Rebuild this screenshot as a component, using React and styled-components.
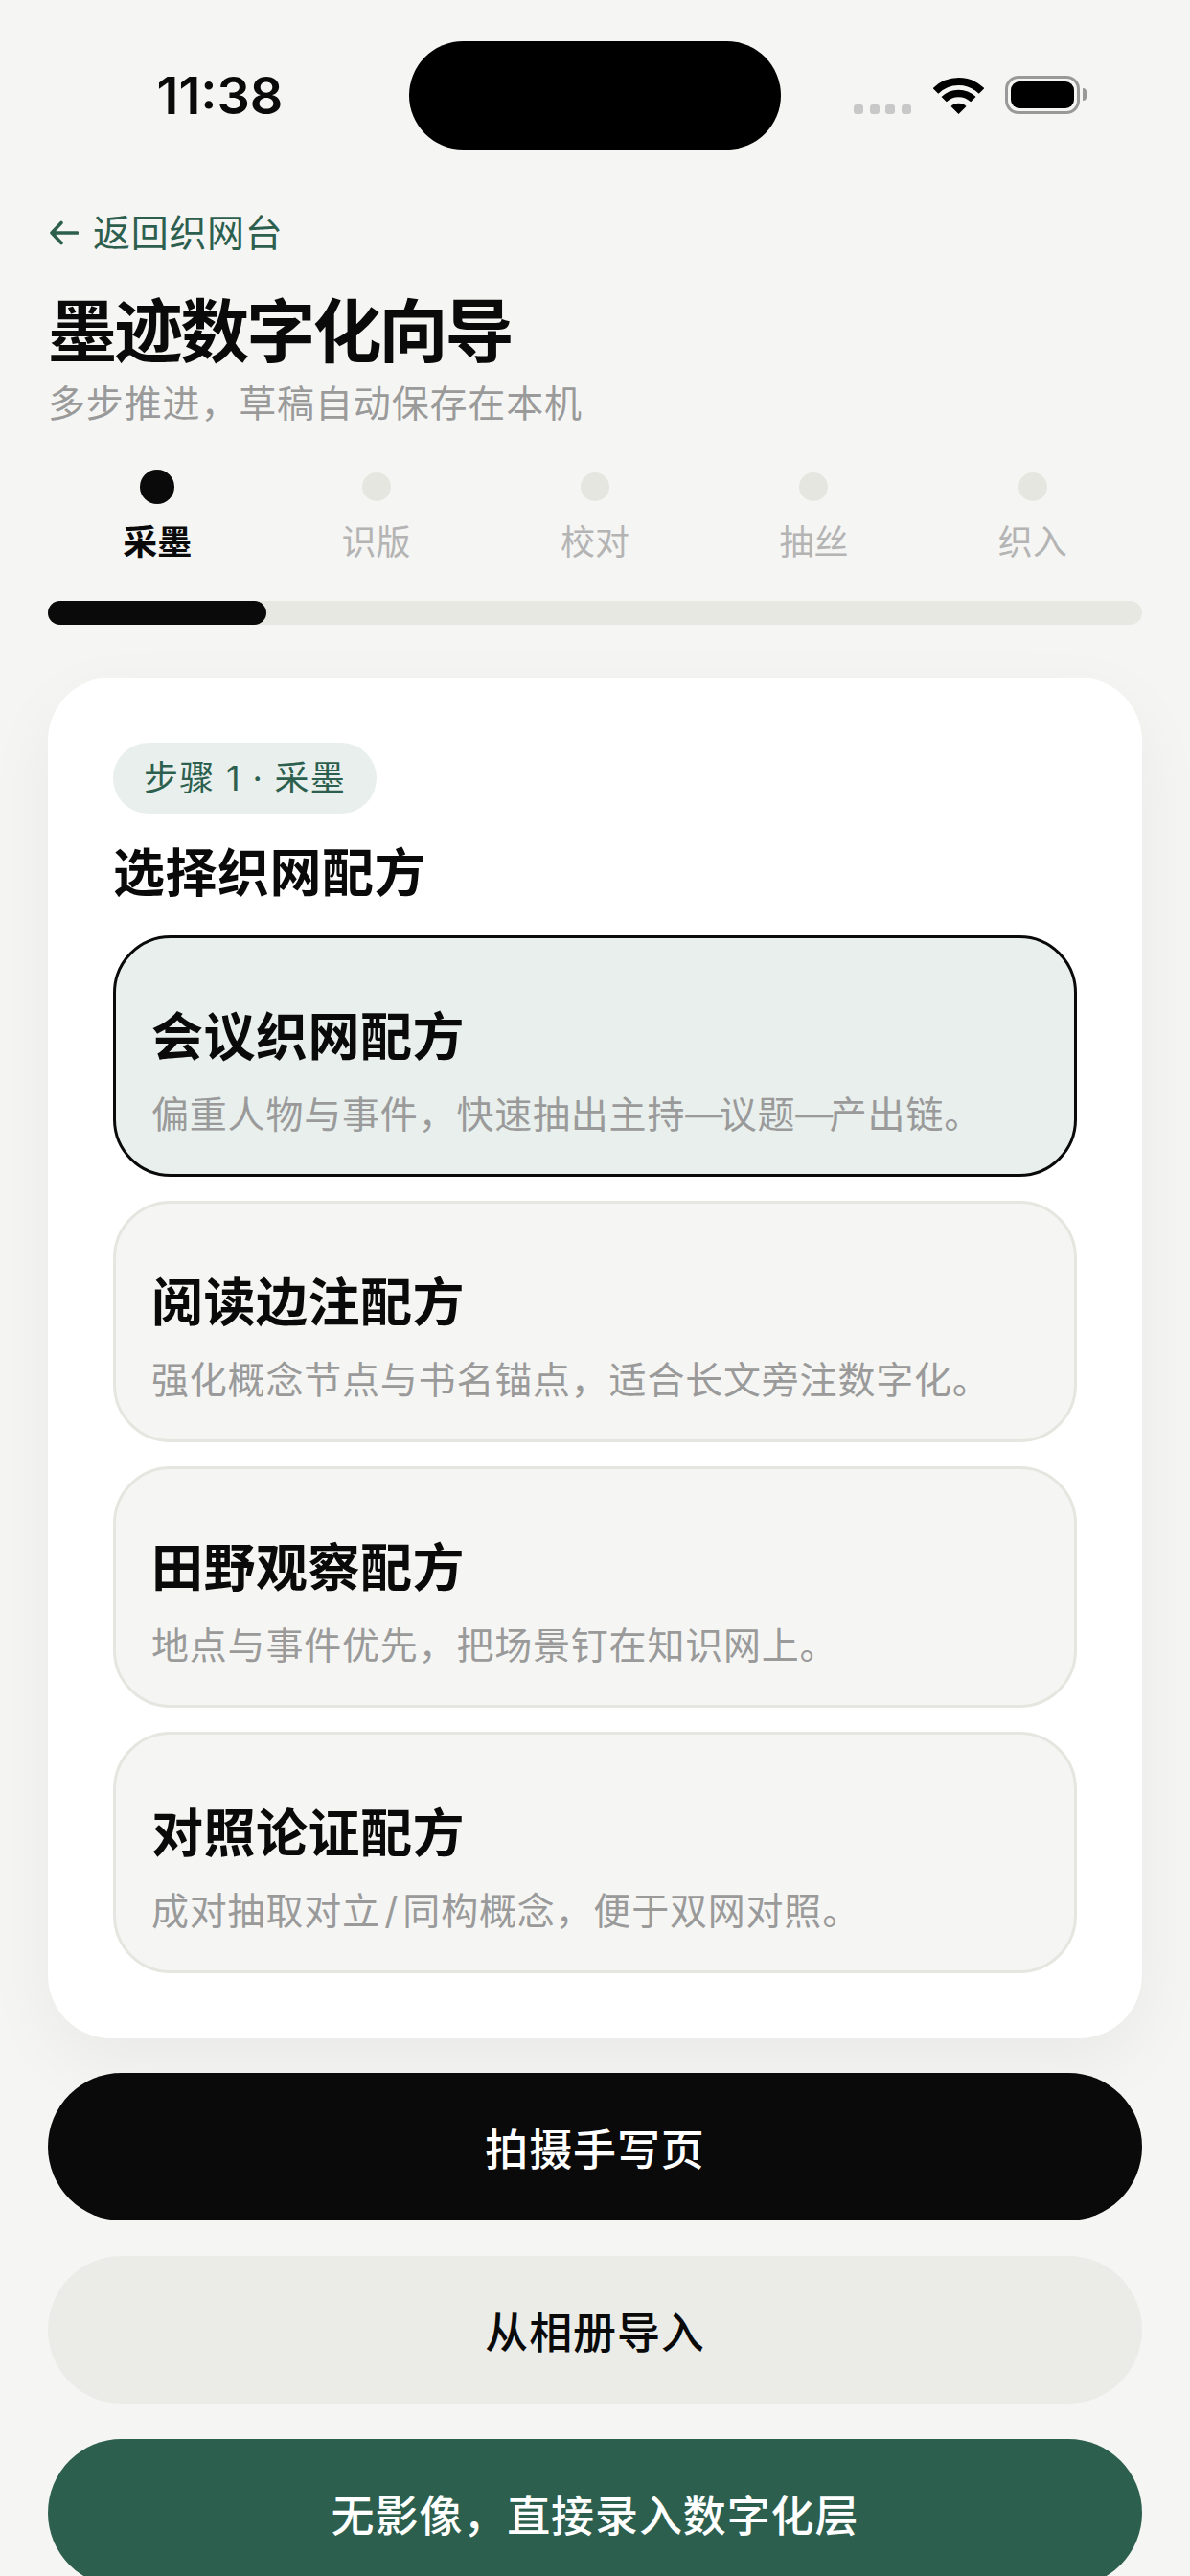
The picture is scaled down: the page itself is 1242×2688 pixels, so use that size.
import styled, { createGlobalStyle } from "styled-components";

const GlobalStyle = createGlobalStyle`
  html, body {
    margin: 0;
    padding: 0;
    background: #f5f5f3;
  }
  * {
    box-sizing: border-box;
  }
`;

const S = {};
S.Page = styled.div`
  width: 1242px;
  height: 2688px;
  overflow: hidden;
  background: #f5f5f3;
  color: #0a0a0a;
  font-family: "Inter", "Noto Sans CJK SC", sans-serif;
`;
S.StatusBar = styled.div`
  display: grid;
  grid-template-columns: 427px 388px 1fr;
  padding-top: 43px;
  height: 156px;
`;
S.Time = styled.div`
  padding: 24px 0 0 32px;
  text-align: center;
  font-size: 54px;
  line-height: 66px;
  font-weight: 600;
`;
S.Island = styled.div`
  height: 113px;
  border-radius: 57px;
  background: #000;
`;
S.StatusIcons = styled.div`
  display: flex;
  align-items: flex-end;
  height: 76px;
  padding-left: 76px;
`;
S.SignalDots = styled.div`
  display: flex;
  gap: 6.5px;
  margin-right: 23px;
`;
S.SignalDot = styled.div`
  width: 10px;
  height: 10px;
  border-radius: 3px;
  background: #c8c8c8;
`;
S.Battery = styled.div`
  display: flex;
  align-items: center;
  width: 78px;
  height: 40px;
  margin-left: 22px;
  padding: 3px;
  border: 3px solid #999;
  border-radius: 14px;
  position: relative;
  &::after {
    content: "";
    position: absolute;
    right: -10px;
    top: 10px;
    width: 4px;
    height: 13px;
    border-radius: 0 4px 4px 0;
    background: #999;
  }
`;
S.BatteryFill = styled.div`
  width: 100%;
  height: 100%;
  border-radius: 9px;
  background: #000;
`;
S.Main = styled.div`
  padding: 0 50px;
`;
S.Back = styled.div`
  display: flex;
  align-items: center;
  gap: 15px;
  margin-top: 62px;
  padding-left: 2px;
  color: #2d5f4f;
  font-size: 39px;
  line-height: 50px;
  letter-spacing: 0.7px;
`;
S.Title = styled.h1`
  margin: 33px 0 0;
  font-size: 72px;
  line-height: 90px;
  font-weight: 700;
  letter-spacing: -2.9px;
`;
S.Subtitle = styled.p`
  margin: 5px 0 0;
  color: #9a9a9a;
  font-size: 39px;
  line-height: 50px;
  letter-spacing: 0.85px;
`;
S.Steps = styled.div`
  display: grid;
  grid-template-columns: repeat(5, 1fr);
  margin-top: 44px;
`;
S.Step = styled.div`
  display: flex;
  flex-direction: column;
  align-items: center;
`;
S.DotSlot = styled.div`
  display: flex;
  align-items: center;
  justify-content: center;
  height: 36px;
`;
S.Dot = styled.div`
  width: ${({ $active }) => ($active ? "36px" : "30px")};
  height: ${({ $active }) => ($active ? "36px" : "30px")};
  border-radius: 50%;
  background: ${({ $active }) => ($active ? "#0a0a0a" : "#e6e6e0")};
`;
S.StepLabel = styled.div`
  margin-top: 17px;
  color: ${({ $active }) => ($active ? "#0a0a0a" : "#b4b4b4")};
  font-size: 36px;
  line-height: 46px;
  font-weight: ${({ $active }) => ($active ? 700 : 400)};
`;
S.Track = styled.div`
  height: 25px;
  margin-top: 38px;
  border-radius: 13px;
  background: #e8e8e3;
`;
S.TrackFill = styled.div`
  height: 100%;
  border-radius: 13px;
  background: #0a0a0a;
`;
S.Card = styled.div`
  margin-top: 55px;
  padding: 68px;
  border-radius: 66px;
  background: #fff;
  box-shadow: 0 24px 72px rgba(10, 10, 10, 0.05);
`;
S.Pill = styled.div`
  display: inline-block;
  height: 74px;
  padding: 0 32px;
  border-radius: 37px;
  background: #e8efec;
  color: #2d5f4f;
  font-size: 36px;
  line-height: 74px;
  letter-spacing: 1.3px;
`;
S.Heading = styled.h2`
  margin: 27px 0 0;
  font-size: 54px;
  line-height: 72px;
  font-weight: 700;
  letter-spacing: 0.5px;
`;
S.Options = styled.div`
  display: flex;
  flex-direction: column;
  gap: 25px;
  margin-top: 28px;
`;
S.Option = styled.div`
  display: flex;
  flex-direction: column;
  justify-content: center;
  height: 252px;
  padding: 31px 37px 0;
  border: 3px solid ${({ $selected }) => ($selected ? "#0a0a0a" : "#e6e6e0")};
  border-radius: 60px;
  background: ${({ $selected }) => ($selected ? "#e8efec" : "#f5f5f3")};
`;
S.OptionTitle = styled.div`
  font-size: 54px;
  line-height: 72px;
  font-weight: 700;
  letter-spacing: 0.5px;
`;
S.OptionDesc = styled.div`
  margin-top: 19px;
  color: #9a9a9a;
  font-size: 39px;
  line-height: 50px;
  letter-spacing: 0.8px;
  white-space: nowrap;
`;
S.Actions = styled.div`
  display: flex;
  flex-direction: column;
  gap: 37px;
  margin-top: 36px;
`;
S.Action = styled.button`
  flex: none;
  display: block;
  width: 100%;
  height: 154px;
  padding: 0;
  border: none;
  border-radius: 77px;
  background: ${({ $bg }) => $bg};
  color: ${({ $fg }) => $fg};
  font-family: inherit;
  font-size: 45px;
  font-weight: 500;
  letter-spacing: 0.9px;
`;
S.Dash = styled.span`
  letter-spacing: -3.5px;
`;

const STEPS = ["采墨", "识版", "校对", "抽丝", "织入"];

const RECIPES = [
  {
    name: "会议织网配方",
    desc: (
      <>
        偏重人物与事件，快速抽出主持<S.Dash>—</S.Dash>议题<S.Dash>—</S.Dash>产出链。
      </>
    ),
    selected: true,
  },
  { name: "阅读边注配方", desc: "强化概念节点与书名锚点，适合长文旁注数字化。" },
  { name: "田野观察配方", desc: "地点与事件优先，把场景钉在知识网上。" },
  { name: "对照论证配方", desc: "成对抽取对立\u200a/\u200a同构概念，便于双网对照。" },
];

const ACTIONS = [
  { label: "拍摄手写页", bg: "#0a0a0a", fg: "#fff" },
  { label: "从相册导入", bg: "#ebebe7", fg: "#0a0a0a" },
  { label: "无影像，直接录入数字化层", bg: "#2d5f4f", fg: "#fff" },
];

const WifiIcon = () => (
  <svg width="53" height="38" viewBox="0 0 53 38" fill="none">
    <path d="M2.5 14A34 34 0 0 1 50.5 14" stroke="#000" strokeWidth="8" />
    <path d="M11.2 22.7A21.7 21.7 0 0 1 41.8 22.7" stroke="#000" strokeWidth="7.5" />
    <path d="M26.5 38L18.5 30A11.3 11.3 0 0 1 34.5 30Z" fill="#000" />
  </svg>
);

const BackArrow = () => (
  <svg width="30" height="26" viewBox="0 0 30 26" fill="none" stroke="#2d5f4f" strokeWidth="3.6" strokeLinecap="round" strokeLinejoin="round">
    <path d="M12 2.5L2 13L12 23.5M2 13H28.5" />
  </svg>
);

const App = () => (
  <S.Page>
    <GlobalStyle />
    <S.StatusBar>
      <S.Time>11:38</S.Time>
      <S.Island />
      <S.StatusIcons>
        <S.SignalDots>
          {[0, 1, 2, 3].map((i) => (
            <S.SignalDot key={i} />
          ))}
        </S.SignalDots>
        <WifiIcon />
        <S.Battery>
          <S.BatteryFill />
        </S.Battery>
      </S.StatusIcons>
    </S.StatusBar>
    <S.Main>
      <S.Back>
        <BackArrow />
        返回织网台
      </S.Back>
      <S.Title>墨迹数字化向导</S.Title>
      <S.Subtitle>多步推进，草稿自动保存在本机</S.Subtitle>
      <S.Steps>
        {STEPS.map((step, index) => (
          <S.Step key={step}>
            <S.DotSlot>
              <S.Dot $active={index === 0} />
            </S.DotSlot>
            <S.StepLabel $active={index === 0}>{step}</S.StepLabel>
          </S.Step>
        ))}
      </S.Steps>
      <S.Track>
        <S.TrackFill style={{ width: `${(1 / STEPS.length) * 100}%` }} />
      </S.Track>
      <S.Card>
        <S.Pill>步骤 1 · 采墨</S.Pill>
        <S.Heading>选择织网配方</S.Heading>
        <S.Options>
          {RECIPES.map((recipe) => (
            <S.Option key={recipe.name} $selected={recipe.selected}>
              <S.OptionTitle>{recipe.name}</S.OptionTitle>
              <S.OptionDesc>{recipe.desc}</S.OptionDesc>
            </S.Option>
          ))}
        </S.Options>
      </S.Card>
      <S.Actions>
        {ACTIONS.map((action) => (
          <S.Action key={action.label} $bg={action.bg} $fg={action.fg}>
            {action.label}
          </S.Action>
        ))}
      </S.Actions>
    </S.Main>
  </S.Page>
);

export default App;
